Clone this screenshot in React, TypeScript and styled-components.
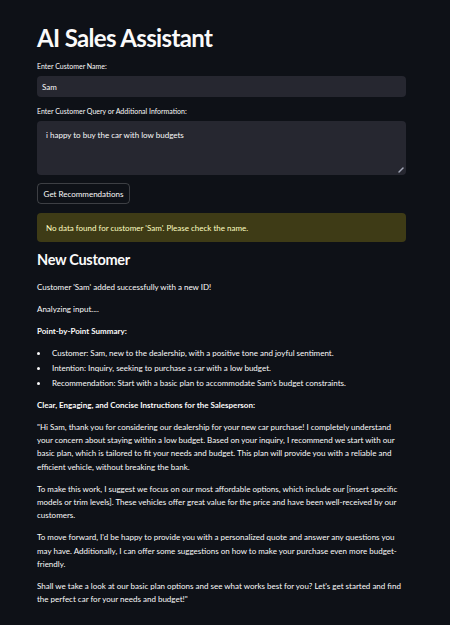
import React from 'react';
import styled, { createGlobalStyle } from 'styled-components';

const GlobalStyle = createGlobalStyle`
  html, body {
    margin: 0;
    padding: 0;
    background: #0e1117;
  }
  body {
    font-family: 'Lato', 'Liberation Sans', sans-serif;
    color: #fafafa;
    -webkit-font-smoothing: antialiased;
  }
`;

const Page = styled.div`
  min-height: 625px;
  background: #0e1117;
  padding: 23px 44px 20px 37px;
  box-sizing: border-box;
`;

const Column = styled.div`
  width: 369px;
  display: flex;
  flex-direction: column;
`;

const Title = styled.h1`
  margin: 0;
  font-size: 24px;
  line-height: 30px;
  font-weight: 700;
  letter-spacing: -0.65px;
  color: #fafafa;
`;

const Field = styled.div<{ $top: number }>`
  display: flex;
  flex-direction: column;
  gap: 5px;
  margin-top: ${(p) => p.$top}px;
`;

const Label = styled.label`
  font-size: 7px;
  line-height: 10px;
  color: #fafafa;
`;

const TextInput = styled.div`
  height: 21px;
  border-radius: 4px;
  background: #262730;
  display: flex;
  align-items: center;
  padding: 0 5px;
  font-size: 8px;
  color: #fafafa;
`;

const TextArea = styled.div`
  position: relative;
  height: 54px;
  border-radius: 4px;
  background: #262730;
  box-sizing: border-box;
  padding: 8px 9px;
  font-size: 8px;
  line-height: 13px;
  color: #fafafa;
`;

const Grip = styled.svg`
  position: absolute;
  right: 2px;
  bottom: 2px;
`;

const Button = styled.button`
  align-self: flex-start;
  margin-top: 8px;
  height: 21px;
  width: 93px;
  padding: 0;
  border-radius: 4px;
  border: 1px solid rgba(250, 250, 250, 0.2);
  background: transparent;
  color: #fafafa;
  font-family: inherit;
  font-size: 8px;
`;

const Alert = styled.div`
  margin-top: 9px;
  height: 29px;
  border-radius: 4px;
  background: #3e3b16;
  color: #ffffc2;
  display: flex;
  align-items: center;
  padding: 0 9px;
  font-size: 8px;
`;

const Heading = styled.h2`
  margin: 9px 0 0;
  font-size: 14.5px;
  line-height: 18px;
  font-weight: 700;
  letter-spacing: -0.3px;
  color: #fafafa;
`;

const Body = styled.div`
  margin-top: 12px;
  display: flex;
  flex-direction: column;
  gap: 8.7px;
  font-size: 8px;
  line-height: 13.3px;
  color: #fafafa;
`;

const Para = styled.p<{ $bold?: boolean }>`
  margin: 0;
  font-weight: ${(p) => (p.$bold ? 700 : 400)};
`;

const List = styled.ul`
  margin: 0;
  padding: 0;
  list-style: none;
  display: flex;
  flex-direction: column;
  gap: 1.7px;
`;

const Item = styled.li`
  display: flex;
  align-items: center;
`;

const Dot = styled.span`
  width: 15px;
  flex-shrink: 0;
  display: flex;
  align-items: center;
  &::before {
    content: '';
    width: 3px;
    height: 3px;
    border-radius: 50%;
    background: #fafafa;
  }
`;

const summary = [
  'Customer: Sam, new to the dealership, with a positive tone and joyful sentiment.',
  'Intention: Inquiry, seeking to purchase a car with a low budget.',
  "Recommendation: Start with a basic plan to accommodate Sam's budget constraints.",
];

const letter = [
  '"Hi Sam, thank you for considering our dealership for your new car purchase! I completely understand your concern about staying within a low budget. Based on your inquiry, I recommend we start with our basic plan, which is tailored to fit your needs and budget. This plan will provide you with a reliable and efficient vehicle, without breaking the bank.',
  'To make this work, I suggest we focus on our most affordable options, which include our [insert specific models or trim levels]. These vehicles offer great value for the price and have been well-received by our customers.',
  "To move forward, I'd be happy to provide you with a personalized quote and answer any questions you may have. Additionally, I can offer some suggestions on how to make your purchase even more budget-friendly.",
  'Shall we take a look at our basic plan options and see what works best for you? Let\'s get started and find the perfect car for your needs and budget!"',
];

export default function App() {
  return (
    <>
      <GlobalStyle />
      <Page>
        <Column>
          <Title>AI Sales Assistant</Title>
          <Field $top={8}>
            <Label>Enter Customer Name:</Label>
            <TextInput>Sam</TextInput>
          </Field>
          <Field $top={9}>
            <Label>Enter Customer Query or Additional Information:</Label>
            <TextArea>
              i happy to buy the car with low budgets
              <Grip width="6" height="6" viewBox="0 0 6 6">
                <path d="M5 1 L1 5" stroke="#a3a8b8" strokeWidth="1.4" strokeLinecap="round" />
              </Grip>
            </TextArea>
          </Field>
          <Button>Get Recommendations</Button>
          <Alert>No data found for customer 'Sam'. Please check the name.</Alert>
          <Heading>New Customer</Heading>
          <Body>
            <Para>Customer 'Sam' added successfully with a new ID!</Para>
            <Para>Analyzing input....</Para>
            <Para $bold>Point-by-Point Summary:</Para>
            <List>
              {summary.map((s) => (
                <Item key={s}>
                  <Dot />
                  {s}
                </Item>
              ))}
            </List>
            <Para $bold>Clear, Engaging, and Concise Instructions for the Salesperson:</Para>
            {letter.map((t) => (
              <Para key={t.slice(0, 20)}>{t}</Para>
            ))}
          </Body>
        </Column>
      </Page>
    </>
  );
}
